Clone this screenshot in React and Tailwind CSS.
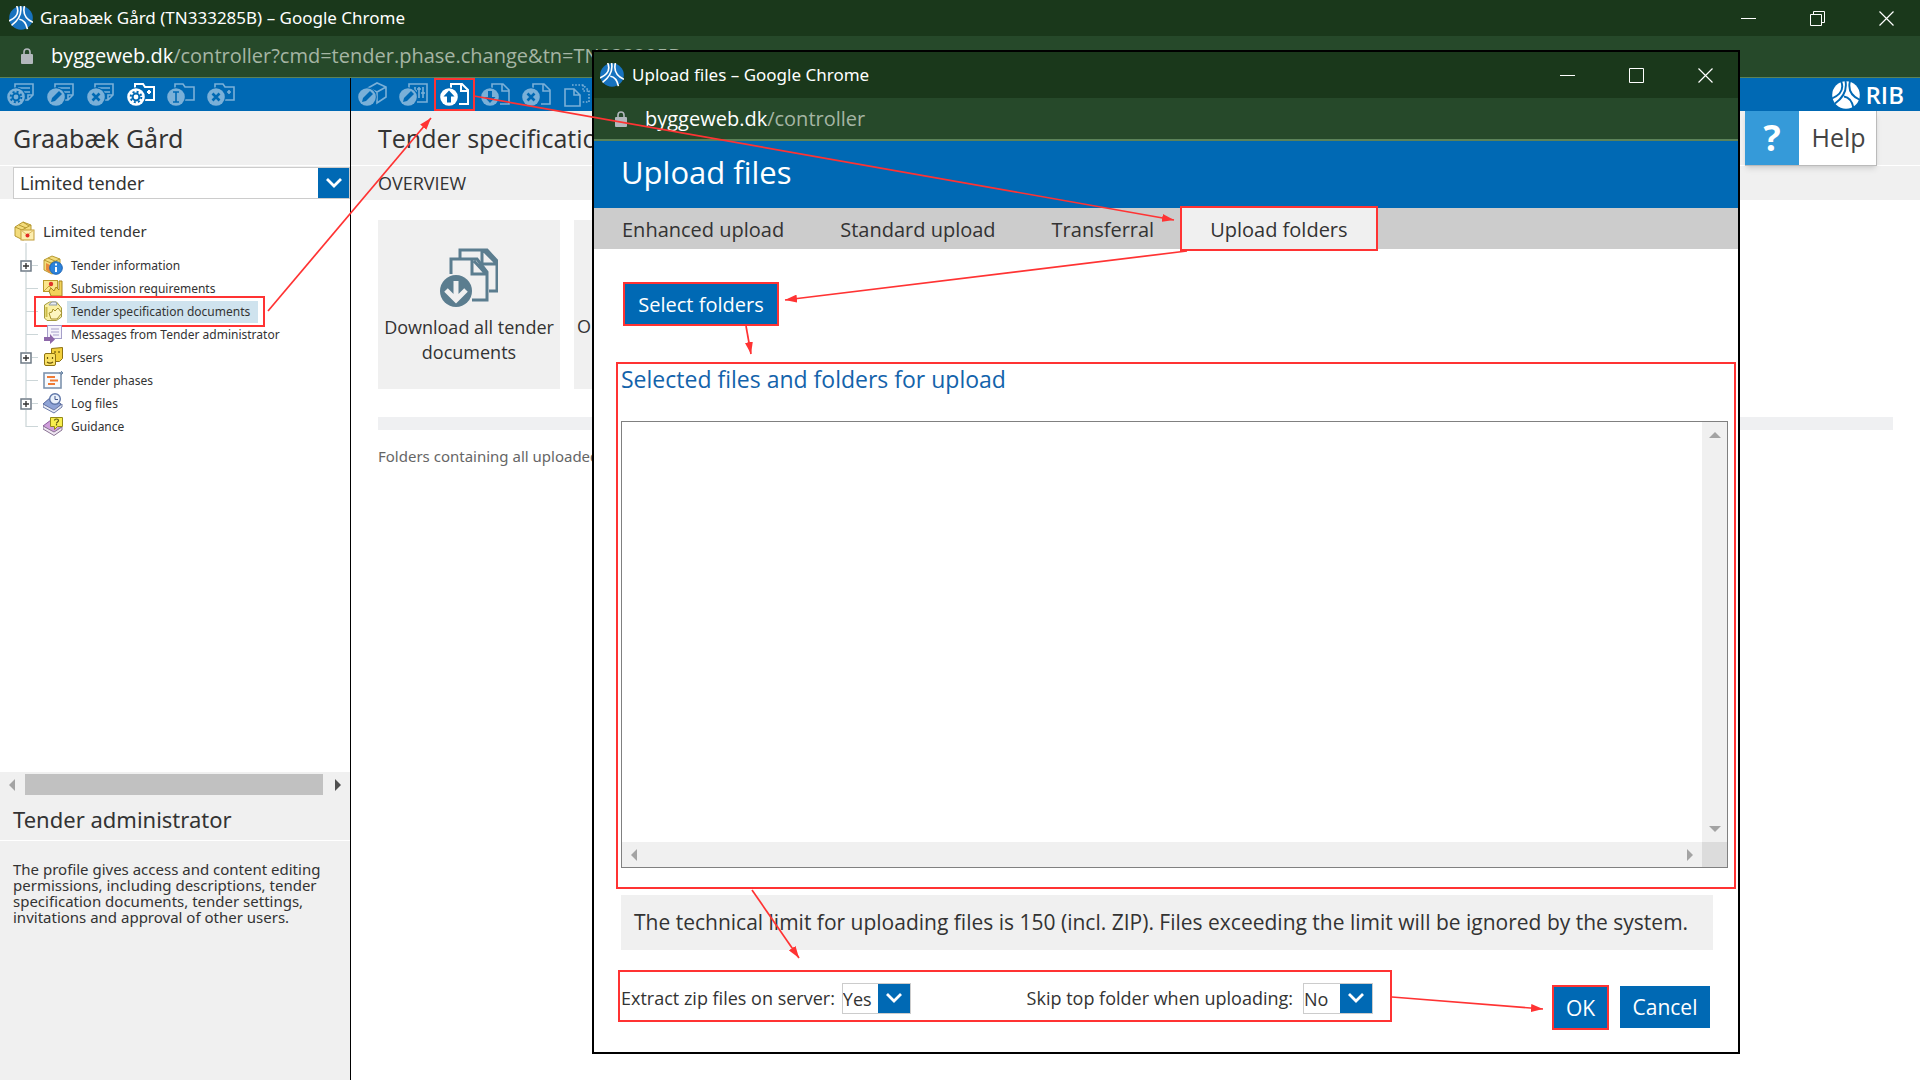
import React, { useState } from 'react';

const BLUE = '#0069b4';

/* ---------- logos and window chrome ---------- */

const RibGlobe = ({ className, globe, lines }) => (
  <svg viewBox="0 0 28 28" className={className} aria-hidden="true">
    <circle cx="14" cy="14" r="13.8" fill={globe} />
    <g fill="none" stroke={lines} strokeWidth="1.9">
      <path d="M9 0C12 7 10 13 0 17.500" />
      <path d="M13.500 0C15 8 12 16 3 22.500" />
      <path d="M18 0C16 8 19 15 28 19" />
      <path d="M12 15.500C16 16 20 20 21.500 27" />
    </g>
  </svg>
);

const Lock = () => (
  <svg viewBox="0 0 12 16" className="h-4 w-3 shrink-0" aria-hidden="true">
    <rect x="0" y="6" width="12" height="10" rx="1" fill="#b3b8bd" />
    <path d="M3 7V4a3 3 0 0 1 6 0v3" fill="none" stroke="#b3b8bd" strokeWidth="1.6" />
  </svg>
);

const WindowButtons = ({ restored }) => (
  <div className="ml-auto flex gap-[3px]">
    <button type="button" aria-label="Minimize" className="flex w-[66px] justify-center">
      <svg viewBox="0 0 15 15" className="h-[15px] w-[15px]" stroke="#fff" fill="none">
        <path d="M0 7.500h15" />
      </svg>
    </button>
    <button type="button" aria-label="Maximize" className="flex w-[66px] justify-center">
      <svg viewBox="0 0 15 15" className="h-[15px] w-[15px]" stroke="#fff" fill="none">
        {restored ? (
          <path d="M.5 3.500h11v11H.5zM3.500 3.500v-3h11v11h-3" />
        ) : (
          <path d="M.5.5h14v14H.5z" />
        )}
      </svg>
    </button>
    <button type="button" aria-label="Close" className="flex w-[66px] justify-center">
      <svg viewBox="0 0 15 15" className="h-[15px] w-[15px]" stroke="#fff" fill="none" strokeWidth="1.2">
        <path d="M.5.5l14 14M14.500.5l-14 14" />
      </svg>
    </button>
  </div>
);

/* ---------- toolbar icons ---------- */

const bases = {
  note: <path d="M8 7V2h18v11l-5 5h-5M21 18v-5h5M11 6h12M14 10h9" />,
  folder: <path d="M8 7V2h8l2 3h9v13h-9M22 8v4M20 10h4" />,
  plainFolder: <path d="M8 7V2h8l2 3h9v13h-9" />,
  cube: <path d="M10 8V6l9-5 9 4v10l-9 6v-11l-9-4M19 10l9-5" />,
  sliders: <path d="M10 7V2h18v18h-10M16 5v7M20 5v11M24 5v11M14 9h4M18 7h4M22 11h4" />,
  file: <path d="M11 7V2h11l6 6v14h-9M21 2v7h7" />,
};

const badges = {
  gear: (
    <>
      <circle cx="9" cy="15" r="3.400" fill="none" stroke={BLUE} strokeWidth="2" />
      <circle cx="9" cy="15" r="5.300" fill="none" stroke={BLUE} strokeWidth="2" strokeDasharray="2 2.160" />
    </>
  ),
  pencil: <path d="M4 20l1-4 7-7 3 3-7 7z" fill={BLUE} />,
  cross: <path d="M5.500 11.500l7 7M12.500 11.500l-7 7" stroke={BLUE} strokeWidth="2.600" />,
  cursor: <path d="M6 10h6M6 20h6M9 10v10" stroke={BLUE} strokeWidth="1.600" fill="none" />,
  up: <path d="M9 8.500l5.500 6h-3.500v6h-4v-6H3.500z" fill={BLUE} />,
  down: <path d="M9 21l5.500-6h-3.500V9h-4v6H3.500z" fill={BLUE} />,
};

const ToolIcon = ({ base, badge, active }) => {
  const tone = active ? '#ffffff' : '#7ab0d8';
  return (
    <svg viewBox="0 0 30 25" className="h-[25px] w-[30px]" aria-hidden="true">
      {base === 'copies' ? (
        <g fill="none" stroke={tone} strokeWidth="1.600">
          <path d="M2 7h9l6 6v11H2zM11 7v6h6" />
          <path d="M9 3h11l6 6v11h-7M20 3v6h6" strokeDasharray="1.600 1.600" />
        </g>
      ) : (
        <>
          <g fill="none" stroke={tone} strokeWidth={active ? 2 : 1.6}>{bases[base]}</g>
          <circle cx="9" cy="15" r="9.800" fill={BLUE} />
          <circle cx="9" cy="15" r="8.800" fill={tone} />
          {badges[badge]}
        </>
      )}
    </svg>
  );
};

const leftTools = [
  { label: 'New note', base: 'note', badge: 'gear' },
  { label: 'Edit note', base: 'note', badge: 'pencil' },
  { label: 'Delete note', base: 'note', badge: 'cross' },
  { label: 'New folder', base: 'folder', badge: 'gear', active: true },
  { label: 'Rename folder', base: 'plainFolder', badge: 'cursor' },
  { label: 'Delete folder', base: 'folder', badge: 'cross' },
];

const rightTools = [
  { label: 'Edit object', base: 'cube', badge: 'pencil' },
  { label: 'Edit settings', base: 'sliders', badge: 'pencil' },
  { label: 'Upload files', base: 'file', badge: 'up', active: true, marked: true },
  { label: 'Download files', base: 'file', badge: 'down' },
  { label: 'Delete files', base: 'file', badge: 'cross' },
  { label: 'Copy files', base: 'copies' },
];

const Toolbar = ({ tools, buttonWidth }) => (
  <div className="flex h-full">
    {tools.map((tool) => (
      <button
        key={tool.label}
        type="button"
        aria-label={tool.label}
        className={`flex items-center justify-center ${buttonWidth} ${
          tool.marked ? 'outline-2 -outline-offset-2 outline-[#ff3333]' : ''
        }`}
      >
        <ToolIcon {...tool} />
      </button>
    ))}
  </div>
);

/* ---------- tree ---------- */

const treeIcons = {
  root: (
    <>
      <path d="M1 6l8-5 8 3v12l-8 3-8-4z" fill="#f3dc7c" stroke="#b79a32" />
      <path d="M1 6l7 3 9-5M8 9v10M5 4l7 3M9 1l6 4" fill="none" stroke="#b79a32" />
      <rect x="7" y="9" width="13" height="10" fill="#fdeeb0" stroke="#c19d3a" />
      <path d="M7 9l6 5 7-5" fill="none" stroke="#dcb95c" />
      <circle cx="13.500" cy="14.500" r="2" fill="#e22b25" />
    </>
  ),
  info: (
    <>
      <path d="M1 5l8-4 8 3v11l-8 4-8-4z" fill="#f3dc7c" stroke="#b79a32" />
      <path d="M1 5l7 3 9-4M8 8v10M5 3l7 3" fill="none" stroke="#b79a32" />
      <path d="M3 8l4 2v8l-4-3z" fill="#e88a3a" />
      <circle cx="13" cy="13" r="6.300" fill="#2c83dc" stroke="#1c62b4" />
      <path d="M13 12v5M13 8.500v2" stroke="#fff" strokeWidth="2" />
    </>
  ),
  submission: (
    <>
      <rect x="0.500" y="2.500" width="14" height="11" fill="#fbe68c" stroke="#b99a2a" />
      <path d="M1 13l5-5 5 5" fill="none" stroke="#c9a436" />
      <circle cx="8" cy="6" r="2.200" fill="#e0342b" />
      <path d="M6 13l2-3 3 3 2-4 3 3 0-9h3v15H8z" fill="#f2d35a" stroke="#a8851e" />
    </>
  ),
  spec: (
    <>
      <path d="M1.500 4l5-3h7l5 6v9l-5 3.500H4L1.500 17z" fill="#faf0a4" stroke="#a39a3c" />
      <path d="M6 3.500l3-2.500h4l1 3H6z" fill="#e8edf2" stroke="#8e9aa8" />
      <path d="M8 18l-2-6 3-1 1-3 2 2 3-3 4 5-5 6z" fill="#fdf5bf" stroke="#a8922f" />
      <path d="M3.500 6v10" stroke="#cdbd4a" strokeWidth="2" />
    </>
  ),
  message: (
    <>
      <rect x="4.500" y="1.500" width="14" height="13" fill="#f5f3fb" stroke="#a59fc9" />
      <path d="M8 5h8M8 8h8M10 11h6" stroke="#a59fc9" />
      <path d="M1 7v6h6v-3l5 5.500-5 4.500v-3H1z" fill="#8d67a9" />
    </>
  ),
  users: (
    <>
      <path d="M8.500 1.500l11-1v11l-3 3h-8z" fill="#f2cf3c" stroke="#8e7212" />
      <rect x="1.500" y="6.500" width="11" height="12" rx="1.500" fill="#f9e064" stroke="#8e7212" />
      <path d="M4.500 10v2M9.500 10v2M4 15c2 1.500 4 1.500 6 0M12 4v2M16 4v2" fill="none" stroke="#6c560a" strokeWidth="1.200" />
    </>
  ),
  phases: (
    <>
      <rect x="1" y="3" width="17" height="15" fill="#f7fafd" stroke="#7d93ad" strokeWidth="1.600" />
      <path d="M4 7h8M7 10.500h8M5 14h7" stroke="#ef7a35" strokeWidth="1.800" />
      <path d="M16 3h3M18 1l2 2-2 2" fill="none" stroke="#6b86a6" />
    </>
  ),
  log: (
    <>
      <path d="M0 11l8-7 10 7-7 7z" fill="#8ea3d6" stroke="#52659c" />
      <path d="M0 11l11 6 8-6v3l-8 6L0 14z" fill="#e9edf6" stroke="#6a78a6" />
      <circle cx="12" cy="6" r="5.300" fill="#eaf1fb" stroke="#5f76a8" strokeWidth="1.400" />
      <path d="M12 3v3.500h3" fill="none" stroke="#44598c" />
    </>
  ),
  guidance: (
    <>
      <path d="M0 10l8-6 10 7-7 6z" fill="#cf9edb" stroke="#8a5b9b" />
      <path d="M0 10l11 6 8-5v3l-8 5.500L0 13z" fill="#efe6f2" stroke="#8a7494" />
      <path d="M7.500 1.500h12v9h-5l-3 3v-3h-4z" fill="#f8ee4e" stroke="#958a17" />
      <path d="M11.500 4.500c0-2 4-2 4 0 0 1.500-2 1.500-2 3M13.500 8v1.500" fill="none" stroke="#5e5710" strokeWidth="1.200" />
    </>
  ),
};

const TreeIcon = ({ name }) => (
  <svg viewBox="0 0 21 21" className="h-[21px] w-[21px] shrink-0" aria-hidden="true">
    {treeIcons[name]}
  </svg>
);

const treeItems = [
  { label: 'Tender information', icon: 'info', expandable: true },
  { label: 'Submission requirements', icon: 'submission' },
  { label: 'Tender specification documents', icon: 'spec', selected: true },
  { label: 'Messages from Tender administrator', icon: 'message' },
  { label: 'Users', icon: 'users', expandable: true },
  { label: 'Tender phases', icon: 'phases' },
  { label: 'Log files', icon: 'log', expandable: true },
  { label: 'Guidance', icon: 'guidance' },
];

const TreeRow = ({ item }) => (
  <li className="relative flex h-[23px] items-center pl-5">
    {item.expandable ? (
      <button type="button" aria-label={`Expand ${item.label}`} className="z-10 h-3 w-3 shrink-0 bg-white">
        <svg viewBox="0 0 12 12" className="h-3 w-3" fill="none">
          <path d="M1 1h10v10H1z" stroke="#6f7b86" strokeWidth="1.500" />
          <path d="M3 6h6M6 3v6" stroke="#333" strokeWidth="1.400" />
        </svg>
      </button>
    ) : (
      <span className="ml-[6px] h-px w-[6px] bg-[#ccd6d8]" />
    )}
    <span className="h-px w-[6px] bg-[#ccd6d8]" />
    <span
      className={`-ml-1 flex h-[31px] items-center pr-[7px] pl-[9px] ${
        item.selected ? 'outline-2 -outline-offset-2 outline-[#ff3333]' : ''
      }`}
    >
      <TreeIcon name={item.icon} />
      <a
        href="#tree"
        className={`ml-[3px] pr-2 pl-[4px] text-[12px] leading-[22px] whitespace-nowrap ${
          item.selected ? 'bg-[#cfe3ee]' : ''
        }`}
      >
        {item.label}
      </a>
    </span>
  </li>
);

/* ---------- small controls ---------- */

const Triangle = ({ dir, dark }) => {
  const shapes = {
    left: 'M9 0v12L3 6z',
    right: 'M3 0v12l6-6z',
    up: 'M0 9h12L6 3z',
    down: 'M0 3h12L6 9z',
  };
  return (
    <svg viewBox="0 0 12 12" className="h-3 w-3 shrink-0" aria-hidden="true">
      <path d={shapes[dir]} fill={dark ? '#505050' : '#a3a3a3'} />
    </svg>
  );
};

const SelectBox = ({ id, label, value, onChange, options, className, arrow, text }) => (
  <div className={`relative flex border border-[#ccc] bg-white ${className}`}>
    <select
      id={id}
      aria-label={label}
      value={value}
      onChange={(e) => onChange(e.target.value)}
      className={`w-full appearance-none bg-white text-[18px] text-[#333] outline-none ${text}`}
    >
      {options.map((o) => (
        <option key={o}>{o}</option>
      ))}
    </select>
    <span
      className={`pointer-events-none absolute inset-y-0 right-0 flex items-center justify-center bg-[#0069b4] ${arrow}`}
    >
      <svg viewBox="0 0 16 10" className="h-[10px] w-4" fill="none" aria-hidden="true">
        <path d="M1 1l7 7 7-7" stroke="#fff" strokeWidth="2.800" />
      </svg>
    </span>
  </div>
);

/* ---------- upload window ---------- */

const tabs = ['Enhanced upload', 'Standard upload', 'Transferral', 'Upload folders'];

const UploadWindow = () => {
  const [tab, setTab] = useState('Upload folders');
  const [extract, setExtract] = useState('Yes');
  const [skip, setSkip] = useState('No');

  return (
    <section className="absolute top-[50px] right-[180px] bottom-[26px] left-[592px] flex flex-col border-2 border-black bg-white">
      <div className="flex h-[46px] items-center bg-[#1a381b] pl-[6px] text-white">
        <RibGlobe className="h-6 w-6" globe="#1772be" lines="#fff" />
        <span className="ml-2 font-['Noto_Sans',sans-serif] text-[17px]">Upload files – Google Chrome</span>
        <WindowButtons />
      </div>
      <div className="flex h-[43px] items-center border-b-2 border-[#5c8258] bg-[#26492a] pl-[21px]">
        <Lock />
        <span className="ml-[18px] text-[20px] text-[#a5b5a4]">
          <span className="text-white">byggeweb.dk</span>/controller
        </span>
      </div>
      <h2 className="flex h-[67px] items-center bg-[#0069b4] pb-1 pl-[27px] text-[31px] text-white">Upload files</h2>
      <div className="flex h-[41px] bg-[#ccc]">
        {tabs.map((name) => (
          <button
            key={name}
            type="button"
            onClick={() => setTab(name)}
            className={`px-[28px] pt-[3px] text-[20px] ${
              tab === name ? 'bg-[#f0f0f0] outline-2 outline-[#ff3333]' : ''
            }`}
          >
            {name}
          </button>
        ))}
      </div>

      <div className="flex flex-1 flex-col pt-[33px] pr-[2px] pb-[22px] pl-[22px]">
        <button
          type="button"
          className="ml-[7px] h-11 w-[156px] border-2 border-[#ff3333] bg-[#0069b4] pt-[2px] text-[20px] text-white"
        >
          Select folders
        </button>

        <div className="mt-9 flex flex-1 flex-col border-2 border-[#ff3333] pr-[6px] pb-[19px] pl-[3px]">
          <label htmlFor="selected-files" className="h-[57px] text-[23px] leading-[30px] text-[#1363ab]">
            Selected files and folders for upload
          </label>
          <div className="flex flex-1 flex-col border border-[#808080]">
            <div className="flex flex-1">
              <textarea id="selected-files" className="flex-1 resize-none outline-none" />
              <div className="flex w-[25px] flex-col items-center justify-between bg-[#f0f0f0] py-[7px]">
                <Triangle dir="up" />
                <Triangle dir="down" />
              </div>
            </div>
            <div className="flex h-[25px] bg-[#f0f0f0]">
              <div className="flex flex-1 items-center justify-between px-[6px]">
                <Triangle dir="left" />
                <Triangle dir="right" />
              </div>
              <div className="w-[25px] bg-[#dcdcdc]" />
            </div>
          </div>
        </div>

        <p className="mt-[6px] mr-[23px] ml-[5px] flex h-[55px] items-center bg-[#f0f0f0] pl-[13px] text-[21px] whitespace-nowrap">
          The technical limit for uploading files is 150 (incl. ZIP). Files exceeding the limit will be ignored by the system.
        </p>

        <div className="mt-5 flex items-start pl-[2px]">
          <div className="flex h-[52px] w-[774px] items-center justify-between border-2 border-[#ff3333] pt-1 pr-[17px] pl-px text-[18px] whitespace-nowrap">
            <div className="flex items-center gap-[7px]">
              <label htmlFor="extract-zip">Extract zip files on server:</label>
              <SelectBox
                id="extract-zip"
                value={extract}
                onChange={setExtract}
                options={['Yes', 'No']}
                className="h-[31px] w-[69px]"
                arrow="w-8"
                text="pt-[2px]"
              />
            </div>
            <div className="flex items-center gap-[10px]">
              <label htmlFor="skip-top">Skip top folder when uploading:</label>
              <SelectBox
                id="skip-top"
                value={skip}
                onChange={setSkip}
                options={['No', 'Yes']}
                className="h-[31px] w-[70px]"
                arrow="w-8"
                text="pt-[2px]"
              />
            </div>
          </div>
          <div className="mt-[15px] mr-[26px] ml-auto flex gap-[11px] text-[21px] text-white">
            <button type="button" className="h-[45px] w-[57px] border-2 border-[#ff3333] bg-[#0069b4] pt-[2px]">
              OK
            </button>
            <button type="button" className="my-px h-[42px] w-[90px] bg-[#0069b4] pt-[2px]">
              Cancel
            </button>
          </div>
        </div>
      </div>
    </section>
  );
};

/* ---------- red guide arrows drawn over the windows ---------- */

const arrows = [
  [268, 311, 431, 118],
  [474, 96, 1174, 220],
  [1187, 251, 785, 300],
  [746, 326, 751, 354],
  [752, 890, 799, 958],
  [1392, 997, 1543, 1009],
];

const Arrows = () => (
  <svg className="pointer-events-none absolute top-0 left-0" width="1920" height="1080" aria-hidden="true">
    <defs>
      <marker id="tip" viewBox="0 0 12 8" refX="12" refY="4" markerWidth="12" markerHeight="8" markerUnits="userSpaceOnUse" orient="auto">
        <path d="M0 0l12 4-12 4z" fill="#ff3333" />
      </marker>
    </defs>
    {arrows.map(([x1, y1, x2, y2]) => (
      <line key={x1} x1={x1} y1={y1} x2={x2} y2={y2} stroke="#ff3333" strokeWidth="1.700" markerEnd="url(#tip)" />
    ))}
  </svg>
);

const DownloadIcon = () => (
  <svg viewBox="0 0 58 59" className="h-[59px] w-[58px]" aria-hidden="true">
    <g fill="none" stroke="#5b7d8f" strokeWidth="3">
      <path d="M20 10V2h27l10 11v30h-8M42 2v14h14M44 3l12 12" />
      <path d="M11 26V11h26l10 13v28H32M32 11v15h15M34 13l12 13" />
    </g>
    <circle cx="16" cy="43" r="16" fill="#5b7d8f" />
    <path d="M16 33v18M6 42l10 10 10-10" fill="none" stroke="#f0f0f0" strokeWidth="5" />
  </svg>
);

const App = () => {
  const [phase, setPhase] = useState('Limited tender');

  return (
    <div className="relative flex min-h-screen flex-col overflow-hidden bg-white font-['Open_Sans',sans-serif] text-[#333]">
      <header>
        <div className="flex h-9 items-center bg-[#1a381b] pr-px pl-[9px] text-white">
          <RibGlobe className="h-6 w-6" globe="#1772be" lines="#fff" />
          <span className="ml-[7px] font-['Noto_Sans',sans-serif] text-[17px]">
            Graabæk Gård (TN333285B) – Google Chrome
          </span>
          <WindowButtons restored />
        </div>
        <div className="flex h-[42px] items-center border-b border-[#5c8258] bg-[#26492a] pb-[2px] pl-[21px]">
          <Lock />
          <span className="ml-[18px] text-[20px] text-[#a5b5a4]">
            <span className="text-white">byggeweb.dk</span>/controller?cmd=tender.phase.change&amp;tn=TN333285B
          </span>
        </div>
      </header>

      <div className="flex flex-1">
        <aside className="flex w-[351px] shrink-0 flex-col border-r border-black font-['Noto_Sans',sans-serif]">
          <div className="h-[33px] bg-[#0069b4] pl-[2px]">
            <Toolbar tools={leftTools} buttonWidth="w-[40px]" />
          </div>
          <h1 className="flex h-[55px] items-center border-b border-white bg-[#f0f0f0] pt-[2px] pl-[13px] text-[25px]">
            Graabæk Gård
          </h1>
          <div className="bg-[#f0f0f0] pt-px pl-[13px]">
            <SelectBox
              id="tender-phase"
              label="Tender phase"
              value={phase}
              onChange={setPhase}
              options={['Limited tender']}
              className="h-8"
              arrow="w-[31px]"
              text="pl-[6px]"
            />
          </div>

          <nav className="flex-1 pt-5">
            <div className="flex h-6 items-center gap-2 pl-[14px]">
              <TreeIcon name="root" />
              <span className="text-[15px]">Limited tender</span>
            </div>
            <ul className="relative mt-[11px]">
              <span className="absolute -top-[11px] bottom-[11px] left-[25px] w-[2px] bg-[#dfe5e6]" />
              {treeItems.map((item) => (
                <TreeRow key={item.label} item={item} />
              ))}
            </ul>
          </nav>

          <div className="min-h-[308px] bg-[#f0f0f0]">
            <div className="flex items-center gap-[7px] px-[6px] pt-[2px]">
              <Triangle dir="left" />
              <span className="h-[21px] flex-1 bg-[#c1c1c1]" />
              <span className="pl-[2px]">
                <Triangle dir="right" dark />
              </span>
            </div>
            <h2 className="flex h-[46px] items-center border-b border-white pt-1 pl-[13px] text-[22px]">
              Tender administrator
            </h2>
            <p className="pt-5 pr-5 pl-[13px] text-[15px] leading-4">
              The profile gives access and content editing permissions, including descriptions, tender specification
              documents, tender settings, invitations and approval of other users.
            </p>
          </div>
        </aside>

        <main className="min-w-0 flex-1">
          <div className="flex h-[33px] bg-[#0069b4] pr-4 pl-px">
            <Toolbar tools={rightTools} buttonWidth="w-[41px]" />
            <div className="ml-auto flex items-center gap-[6px] text-[24px] font-semibold text-white">
              <RibGlobe className="h-7 w-7" globe="#fff" lines="#0069b4" />
              RIB
            </div>
          </div>
          <div className="relative bg-[#f0f0f0]">
            <h2 className="flex h-[55px] items-center border-b border-white pt-[2px] pl-[27px] text-[25px]">
              Tender specification documents
            </h2>
            <h3 className="flex h-[34px] items-center pl-[27px] text-[18px]">OVERVIEW</h3>
            <button
              type="button"
              className="absolute top-0 right-[43px] flex h-[55px] items-center border-r border-b border-[#bbb] bg-white shadow-md"
            >
              <span className="flex h-full w-[54px] items-center justify-center bg-[#359ad9] text-[36px] font-bold text-white">
                ?
              </span>
              <span className="w-[77px] pl-[2px] text-center text-[25px] text-[#444]">Help</span>
            </button>
          </div>
          <div className="pt-5 pr-[27px] pl-[27px]">
            <div className="flex gap-[14px]">
              <button
                type="button"
                className="flex h-[169px] w-[182px] flex-col items-center bg-[#f0f0f0] pt-7 text-[18px] leading-[25px]"
              >
                <DownloadIcon />
                <span className="mt-2">Download all tender documents</span>
              </button>
              <button type="button" className="h-[169px] w-[182px] bg-[#f0f0f0] pl-[3px] text-left text-[18px] leading-[25px]">
                <span className="block pt-11">O</span>
              </button>
            </div>
            <div className="mt-7 h-[13px] bg-[#eff0f2]" />
            <p className="mt-[14px] font-['Noto_Sans',sans-serif] text-[15px] leading-6 text-[#666]">
              Folders containing all uploaded files
            </p>
          </div>
        </main>
      </div>

      <UploadWindow />
      <Arrows />
    </div>
  );
};

export default App;
